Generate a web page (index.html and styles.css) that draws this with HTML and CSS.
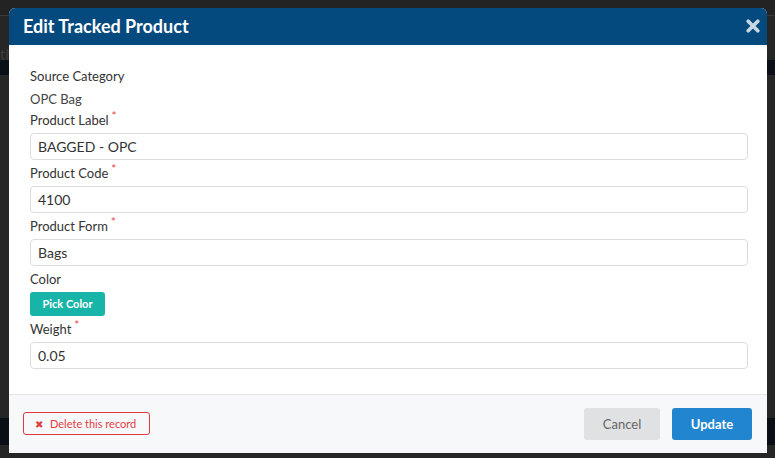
FILE: index.html
```html
<!DOCTYPE html>
<html>
<head>
<meta charset="utf-8">
<link rel="stylesheet" href="styles.css">
</head>
<body>
<div class="page">
  <div class="page-top"></div>
  <div class="page-sub"><span class="ghost">th</span></div>
  <div class="page-dark"></div>
  <div class="page-mid"></div>
  <div class="page-dark2"></div>
  <div class="page-end"></div>
</div>

<div class="modal">
  <div class="modal-header">
    <h1 class="modal-title">Edit Tracked Product</h1>
    <button class="close" aria-label="Close">
      <svg width="14" height="14" viewBox="0 0 14 14"><path d="M2.2 2.2 L11.8 11.8 M11.8 2.2 L2.2 11.8" stroke="#c9d7e4" stroke-width="3.6" stroke-linecap="round"/></svg>
    </button>
  </div>
  <div class="modal-body">
    <div class="text-line label">Source Category</div>
    <div class="text-line value">OPC Bag</div>
    <div class="field">
      <label class="label">Product Label<span class="req">*</span></label>
      <div class="input">BAGGED - OPC</div>
    </div>
    <div class="field">
      <label class="label">Product Code<span class="req">*</span></label>
      <div class="input">4100</div>
    </div>
    <div class="field">
      <label class="label">Product Form<span class="req">*</span></label>
      <div class="input">Bags</div>
    </div>
    <div class="field">
      <label class="label">Color</label>
      <button class="pick">Pick Color</button>
    </div>
    <div class="field">
      <label class="label">Weight<span class="req">*</span></label>
      <div class="input">0.05</div>
    </div>
  </div>
  <div class="modal-footer">
    <button class="delete"><span class="x">&#10006;</span>Delete this record</button>
    <div class="actions">
      <button class="btn cancel">Cancel</button>
      <button class="btn update">Update</button>
    </div>
  </div>
</div>
</body>
</html>
```

FILE: styles.css
```css
* { box-sizing: border-box; }
html, body { margin: 0; padding: 0; }
body {
  width: 775px;
  height: 458px;
  overflow: hidden;
  background: #252525;
  font-family: Lato, "Liberation Sans", sans-serif;
  position: relative;
}
.page { display: flex; flex-direction: column; height: 458px; }
.page-top { height: 16px; background: #232323; border-bottom: 1px solid #3a3a3a; }
.page-sub { height: 44px; background: #262626; padding-top: 28px; }
.page-dark { height: 15px; background: #0b1016; }
.page-mid { flex: 1; background: #262626; }
.page-dark2 { height: 27px; background: #0a0f15; }
.page-end { height: 13px; background: #262626; }
.ghost { color: #3c3c3c; font-size: 15px; line-height: 15px; }

.modal {
  position: absolute;
  left: 9px;
  top: 8px;
  width: 758px;
  height: 445px;
  background: #fff;
  border-radius: 6px 6px 0 0;
  display: flex;
  flex-direction: column;
  overflow: hidden;
}
.modal-header {
  height: 37px;
  background: #054a7e;
  display: flex;
  align-items: center;
  justify-content: space-between;
  padding: 0 7px 0 14px;
}
.modal-title {
  margin: 0;
  color: #fff;
  font-size: 18px;
  font-weight: 700;
  line-height: 24px;
}
.close {
  border: 0;
  background: transparent;
  padding: 0;
  width: 14px;
  height: 14px;
  display: flex;
}
.modal-body {
  padding: 21px 19px 25px 21px;
  flex: 1;
  border-bottom: 1px solid #e3e3e3;
}
.text-line { line-height: 20px; font-size: 13px; }
.label { display: block; color: #333; font-size: 13px; line-height: 20px; }
.text-line.label { margin-bottom: 3px; }
.value { color: #444; margin-bottom: 1px; }
.req { color: #e8484d; font-size: 12px; vertical-align: top; position: relative; top: -4px; margin-left: 3px; }
.field .label { margin-bottom: 3px; }
.field + .field { margin-top: 3px; }
.input {
  height: 27px;
  border: 1px solid #dcdcdc;
  border-radius: 4px;
  padding: 0 7px;
  font-size: 14px;
  line-height: 25px;
  color: #333;
}
.pick {
  display: block;
  height: 24px;
  width: 75px;
  border: 0;
  border-radius: 3px;
  background: #19b4a8;
  color: #fff;
  font-family: Lato, "Liberation Sans", sans-serif;
  font-weight: 700;
  font-size: 11px;
  padding: 0;
}
.modal-footer {
  height: 59px;
  background: #f7f8fa;
  display: flex;
  align-items: center;
  justify-content: space-between;
  padding: 0 15px 0 14px;
}
.delete {
  height: 23px;
  width: 127px;
  border: 1px solid #dc3a3f;
  border-radius: 3px;
  background: transparent;
  color: #e23d43;
  font-family: Lato, "Liberation Sans", sans-serif;
  font-size: 11px;
  padding: 0 0 0 11px;
  display: flex;
  align-items: center;
  text-align: left;
}
.delete .x { font-size: 10px; margin-right: 7px; }
.actions { display: flex; gap: 12px; }
.btn {
  height: 32px;
  border: 0;
  border-radius: 3px;
  font-family: Lato, "Liberation Sans", sans-serif;
  font-size: 13px;
  padding: 0;
}
.cancel { width: 76px; background: #e0e1e2; color: #666; }
.update { width: 80px; background: #2185d0; color: #fff; font-weight: 700; }
```
